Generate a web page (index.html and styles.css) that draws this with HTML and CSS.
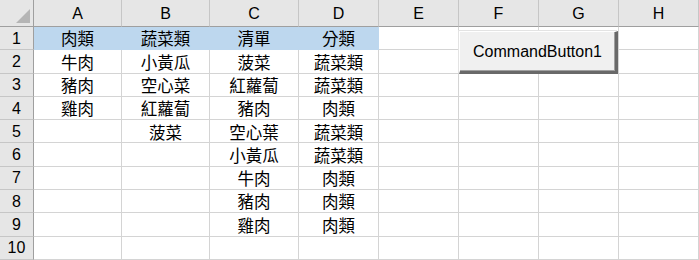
FILE: index.html
```html
<!DOCTYPE html>
<html lang="zh-Hant">
<head>
    <meta charset="UTF-8">
    <title>Sheet1</title>
    <link rel="stylesheet" href="styles.css">
</head>
<body>
    <div class="sheet">
        <div class="grid" id="grid">
            <div class="corner"><span class="corner-mark"></span></div>
        </div>
        <button class="cmd-button">CommandButton1</button>
    </div>
    <script>
        // Cell contents, row by row (columns A-D)
        const data = [
            ['肉類', '蔬菜類', '清單', '分類'],
            ['牛肉', '小黃瓜', '菠菜', '蔬菜類'],
            ['豬肉', '空心菜', '紅蘿蔔', '蔬菜類'],
            ['雞肉', '紅蘿蔔', '豬肉', '肉類'],
            ['', '菠菜', '空心葉', '蔬菜類'],
            ['', '', '小黃瓜', '蔬菜類'],
            ['', '', '牛肉', '肉類'],
            ['', '', '豬肉', '肉類'],
            ['', '', '雞肉', '肉類'],
            ['', '', '', '']
        ];
        const cols = ['A', 'B', 'C', 'D', 'E', 'F', 'G', 'H'];
        const grid = document.getElementById('grid');

        cols.forEach(c => {
            const el = document.createElement('div');
            el.className = 'col-head';
            el.textContent = c;
            grid.appendChild(el);
        });

        data.forEach((row, r) => {
            const head = document.createElement('div');
            head.className = 'row-head';
            head.textContent = r + 1;
            grid.appendChild(head);
            cols.forEach((c, i) => {
                const cell = document.createElement('div');
                cell.className = 'cell';
                if (r === 0 && i < 4) cell.classList.add('header-cell');
                cell.textContent = row[i] || '';
                grid.appendChild(cell);
            });
        });
    </script>
</body>
</html>
```

FILE: styles.css
```css
* {
    margin: 0;
    padding: 0;
    box-sizing: border-box;
}

body {
    background: #fff;
    overflow: hidden;
}

.sheet {
    position: relative;
    width: 699px;
    height: 260px;
    overflow: hidden;
}

.grid {
    display: grid;
    grid-template-columns: 34px 88px 88px 89px 80px 80px 80px 80px 80px;
    grid-template-rows: 27px repeat(10, 23.3px);
    font-family: "Noto Sans CJK TC", "Noto Sans", sans-serif;
    font-size: 16.5px;
    color: #000;
}

/* Headers */
.corner,
.col-head,
.row-head {
    background: #e6e6e6;
    font-family: "Liberation Sans", Arial, sans-serif;
    font-size: 16px;
    display: flex;
    align-items: center;
    justify-content: center;
}

.corner {
    position: relative;
    border-right: 1px solid #9f9f9f;
    border-bottom: 1px solid #9f9f9f;
}

.corner-mark {
    position: absolute;
    right: 3px;
    bottom: 3px;
    width: 0;
    height: 0;
    border-left: 14px solid transparent;
    border-bottom: 14px solid #b5b5b5;
}

.col-head {
    border-right: 1px solid #c6c6c6;
    border-bottom: 1px solid #9f9f9f;
    padding-top: 1px;
}

.row-head {
    border-right: 1px solid #9f9f9f;
    border-bottom: 1px solid #c6c6c6;
    padding-top: 1px;
}

/* Cells */
.cell {
    border-right: 1px solid #d4d4d4;
    border-bottom: 1px solid #d4d4d4;
    display: flex;
    align-items: center;
    justify-content: center;
    white-space: nowrap;
    line-height: 1;
    padding-top: 1px;
}

.header-cell {
    background: #bdd7ee;
    border-right-color: #bdd7ee;
    border-bottom-color: #bdd7ee;
}

/* ActiveX button floating over the sheet */
.cmd-button {
    position: absolute;
    left: 459px;
    top: 31px;
    width: 159px;
    height: 43px;
    background: #f0f0f0;
    border: none;
    border-top: 1px solid #fff;
    border-left: 1px solid #fff;
    border-right: 3px solid #696969;
    border-bottom: 3px solid #696969;
    box-shadow: inset -1px -1px 0 #a0a0a0, -1px -1px 0 #e3e3e3;
    font-family: "Liberation Sans", Arial, sans-serif;
    font-size: 16px;
    color: #000;
    padding-top: 1px;
}
```
